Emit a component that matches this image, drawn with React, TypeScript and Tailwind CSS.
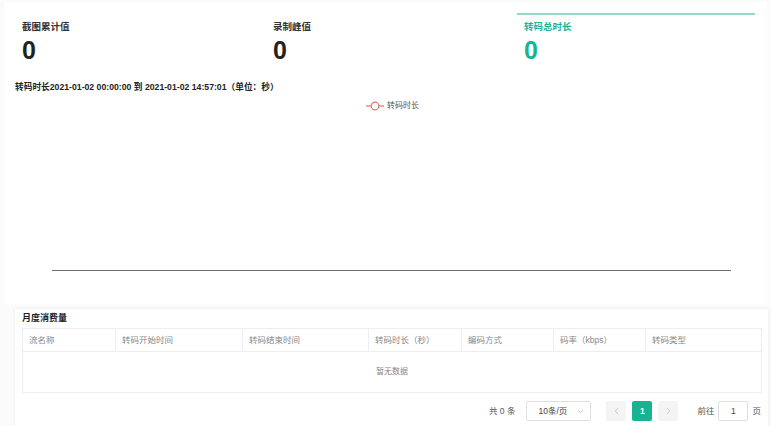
import React from "react";

const teal = "#19b394";

const stats = [
  { label: "截图累计值", value: "0", active: false },
  { label: "录制峰值", value: "0", active: false },
  { label: "转码总时长", value: "0", active: true },
];

const columns = [
  { name: "流名称", w: "w-[93px]" },
  { name: "转码开始时间", w: "w-[127px]" },
  { name: "转码结束时间", w: "w-[126px]" },
  { name: "转码时长（秒）", w: "w-[93px]" },
  { name: "编码方式", w: "w-[92px]" },
  { name: "码率（kbps）", w: "w-[92px]" },
  { name: "转码类型", w: "flex-1" },
];

function StatCard({ label, value, active }: { label: string; value: string; active: boolean }) {
  return (
    <div
      className={`h-[56px] pl-[7px] border-t-2 ${
        active ? "w-[238px] border-[#8fd8ca]" : "w-[251px] border-transparent"
      }`}
    >
      <div
        className={`mt-[6px] text-[9.5px] font-bold leading-[12px] ${
          active ? "text-[#19b394]" : "text-[#333]"
        }`}
      >
        {label}
      </div>
      <div
        className={`mt-[3px] text-[25px] font-bold leading-[28px] ${
          active ? "text-[#19b394]" : "text-[#222]"
        }`}
      >
        {value}
      </div>
    </div>
  );
}

export default function App() {
  return (
    <div
      className="w-[771px] h-[426px] overflow-hidden bg-[#fbfbfb] text-[#333]"
      style={{ fontFamily: '"Liberation Sans", "Noto Sans CJK SC", sans-serif' }}
    >
      {/* top panel */}
      <div className="ml-[4px] mt-[2px] w-[763px] h-[302px] bg-white pt-[11px]">
        <div className="flex pl-[11px]">
          {stats.map((s) => (
            <StatCard key={s.label} {...s} />
          ))}
        </div>
        <div className="mt-[12px] pl-[11px] text-[8.7px] font-bold leading-[12px] text-[#222]">
          转码时长2021-01-02 00:00:00 到 2021-01-02 14:57:01（单位：秒）
        </div>
        <div className="mt-[7px] flex justify-center items-center gap-[3px] pl-[14px] h-[12px]">
          <svg width="18" height="10" viewBox="0 0 18 10">
            <line x1="0" y1="5" x2="18" y2="5" stroke="#e2706a" strokeWidth="1.2" />
            <circle cx="9" cy="5" r="3.8" fill="white" stroke="#e2706a" strokeWidth="1.2" />
          </svg>
          <span className="text-[8px] leading-[10px] text-[#555]">转码时长</span>
        </div>
        <div className="mt-[158px] ml-[48px] w-[679px] h-px bg-[#6e6e6e]" />
      </div>

      {/* bottom panel */}
      <div className="ml-[15px] mt-[5px] w-[753px] h-[120px] bg-white shadow-[0_0_3px_rgba(0,0,0,0.08)] px-[7px] pt-[2px]">
        <div className="text-[9px] font-bold leading-[14px] text-[#222]">月度消费量</div>
        <div className="mt-[3px] w-[740px] border border-[#ebeef5]">
          <div className="flex h-[23px] border-b border-[#ebeef5]">
            {columns.map((c, i) => (
              <div
                key={c.name}
                className={`${c.w} flex items-center pl-[6px] text-[8.5px] text-[#888] ${
                  i < columns.length - 1 ? "border-r border-[#ebeef5]" : ""
                }`}
              >
                {c.name}
              </div>
            ))}
          </div>
          <div className="h-[40px] flex items-center justify-center text-[8px] text-[#888]">
            暂无数据
          </div>
        </div>
        <div className="mt-[8px] flex items-center h-[20px] text-[8.5px] text-[#555]">
          <span className="ml-[467px]">共 0 条</span>
          <div className="ml-[11px] w-[65px] h-[20px] border border-[#dcdfe6] rounded-[2px] flex items-center justify-between pl-[11px] pr-[6px]">
            <span className="text-[#444]">10条/页</span>
            <svg width="7" height="5" viewBox="0 0 7 5">
              <path d="M1 1.2 L3.5 3.6 L6 1.2" fill="none" stroke="#bbb" strokeWidth="0.8" />
            </svg>
          </div>
          <div className="ml-[15px] w-[20px] h-[20px] bg-[#f4f4f5] rounded-[2px] flex items-center justify-center">
            <svg width="5" height="8" viewBox="0 0 5 8">
              <path d="M4 1 L1.2 4 L4 7" fill="none" stroke="#c0c4cc" strokeWidth="0.8" />
            </svg>
          </div>
          <div
            className="ml-[6px] w-[20px] h-[20px] rounded-[2px] flex items-center justify-center text-white font-bold"
            style={{ backgroundColor: teal }}
          >
            1
          </div>
          <div className="ml-[6px] w-[20px] h-[20px] bg-[#f4f4f5] rounded-[2px] flex items-center justify-center">
            <svg width="5" height="8" viewBox="0 0 5 8">
              <path d="M1 1 L3.8 4 L1 7" fill="none" stroke="#c0c4cc" strokeWidth="0.8" />
            </svg>
          </div>
          <span className="ml-[19px]">前往</span>
          <div className="ml-[4px] w-[30px] h-[20px] border border-[#dcdfe6] rounded-[2px] flex items-center justify-center text-[#444]">
            1
          </div>
          <span className="ml-[4px]">页</span>
        </div>
      </div>
    </div>
  );
}
